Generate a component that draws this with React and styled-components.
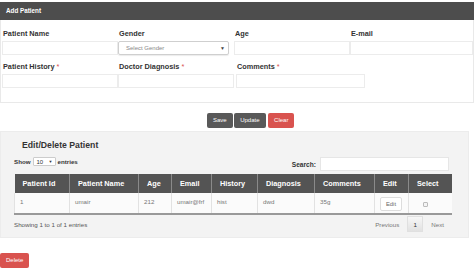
import React from "react";
import styled, { createGlobalStyle } from "styled-components";

const GlobalStyle = createGlobalStyle`
  html, body {
    margin: 0;
    padding: 0;
    background: #fff;
    font-family: "Liberation Sans", Arial, sans-serif;
    color: #333;
  }
  * { box-sizing: border-box; }
`;

const Page = styled.div`
  width: 474px;
  padding-top: 2px;
`;

const FormPanel = styled.section`
  border: 1px solid #e9e9e9;
  border-top: none;
  padding-bottom: 14px;
`;

const PanelHeading = styled.div`
  height: 18px;
  background: #4d4d4d;
  color: #fff;
  font-size: 6.3px;
  font-weight: bold;
  line-height: 18px;
  padding-left: 6px;
  margin: 0 -1px;
`;

const FormGrid = styled.div`
  display: grid;
  grid-template-columns: 116px 116px 116px 1fr;
  row-gap: 7px;
  padding: 9px 0 0 1px;
`;

const Field = styled.div`
  display: flex;
  flex-direction: column;
  padding-left: ${(p) => p.$shift || 0}px;
`;

const Label = styled.label`
  font-size: 7.3px;
  font-weight: bold;
  line-height: 10px;
  color: #333;
  margin-bottom: 2px;
  padding-left: 1px;
  span {
    color: #d9534f;
    font-weight: normal;
    margin-left: 2px;
  }
`;

const Input = styled.div`
  height: 14px;
  width: ${(p) => (p.$width ? `${p.$width}px` : "100%")};
  border: 1px solid #ececec;
  background: #fff;
`;

const Select = styled.div`
  height: 14px;
  width: ${(p) => p.$width}px;
  border: 1px solid #cfcfcf;
  border-radius: 2px;
  box-shadow: 0 1px 1px rgba(0, 0, 0, 0.08);
  display: flex;
  align-items: center;
  justify-content: space-between;
  padding: 0 3px 0 7px;
  font-size: 6px;
  color: #888;
  b {
    font-size: 5px;
    color: #444;
  }
`;

const ButtonRow = styled.div`
  display: flex;
  gap: 1.5px;
  padding-left: 207px;
  margin-top: 10px;
`;

const Button = styled.button`
  height: 15px;
  padding: 0 ${(p) => p.$pad || 5}px;
  border: none;
  border-radius: 2px;
  background: ${(p) => (p.$danger ? "#d9534f" : "#595959")};
  color: #fff;
  font-family: inherit;
  font-size: 6px;
  line-height: 15px;
  margin-left: ${(p) => p.$gap || 0}px;
`;

const ListPanel = styled.section`
  margin-top: 3px;
  width: 469px;
  background: #f3f3f3;
  border: 1px solid #ececec;
  padding: 7px 19px 5px 13px;
`;

const Title = styled.h3`
  margin: 0 0 6px 8px;
  font-size: 8.7px;
  line-height: 12px;
  font-weight: bold;
  color: #333;
`;

const Controls = styled.div`
  display: flex;
  justify-content: space-between;
  align-items: flex-start;
  height: 14px;
  margin-bottom: 3px;
`;

const Length = styled.div`
  display: flex;
  align-items: center;
  gap: 2px;
  font-size: 6.2px;
  font-weight: bold;
  color: #333;
`;

const SmallSelect = styled.div`
  width: 23px;
  height: 9px;
  background: #fff;
  border: 1px solid #ccc;
  border-radius: 1px;
  display: flex;
  align-items: center;
  justify-content: space-between;
  padding: 0 2px 0 3px;
  font-weight: normal;
  font-size: 6px;
  b { font-size: 4px; }
`;

const Search = styled.div`
  display: flex;
  align-items: center;
  gap: 4px;
  font-size: 6.6px;
  font-weight: bold;
  color: #333;
`;

const SearchBox = styled.div`
  width: 129px;
  height: 14px;
  background: #fff;
  border: 1px solid #e6e6e6;
`;

const Table = styled.table`
  width: 437px;
  border-collapse: collapse;
  table-layout: fixed;
  border-bottom: 2px solid #999;
`;

const Th = styled.th`
  height: 19px;
  background: #545454;
  color: #fff;
  font-size: 7.3px;
  font-weight: bold;
  text-align: left;
  padding: 0 0 0 8px;
  border-left: 1px solid #8a8a8a;
  white-space: nowrap;
  &:first-child { border-left: none; }
`;

const Td = styled.td`
  height: 21px;
  background: #fbfbfb;
  border-left: 1px solid #e2e2e2;
  font-size: 6.2px;
  color: #777;
  vertical-align: top;
  padding: 5px 0 0 5px;
  white-space: nowrap;
  overflow: hidden;
`;

const EditButton = styled.div`
  width: 22px;
  height: 14px;
  margin-top: -1px;
  background: #fff;
  border: 1px solid #ddd;
  border-radius: 2px;
  font-size: 5.8px;
  color: #666;
  display: flex;
  align-items: center;
  justify-content: center;
`;

const Check = styled.div`
  width: 5px;
  height: 5px;
  margin: 4px 0 0 9px;
  border: 1px solid #bbb;
  background: #f4f4f4;
  border-radius: 1px;
`;

const Footer = styled.div`
  display: flex;
  justify-content: space-between;
  align-items: center;
  margin-top: 1px;
  height: 16px;
`;

const Info = styled.div`
  font-size: 6.2px;
  color: #555;
`;

const Pager = styled.div`
  display: flex;
  align-items: center;
  font-size: 6.2px;
  color: #777;
  margin-right: 5px;
`;

const PageNum = styled.div`
  width: 16px;
  height: 16px;
  margin: 0 8px;
  background: linear-gradient(#f7f7f7, #e2e2e2);
  border: 1px solid #e0e0e0;
  color: #333;
  display: flex;
  align-items: center;
  justify-content: center;
`;

const DeleteRow = styled.div`
  margin-top: 10px;
`;

const columns = [
  ["Patient Id", 55],
  ["Patient Name", 69],
  ["Age", 33],
  ["Email", 40],
  ["History", 46],
  ["Diagnosis", 57],
  ["Comments", 60],
  ["Edit", 34],
  ["Select", 43],
];

const rows = [
  { id: 1, name: "umair", age: 212, email: "umair@frf", history: "hist", diagnosis: "dwd", comments: "35g" },
];

export default function App() {
  return (
    <Page>
      <GlobalStyle />
      <FormPanel>
        <PanelHeading>Add Patient</PanelHeading>
        <FormGrid>
          <Field>
            <Label>Patient Name</Label>
            <Input />
          </Field>
          <Field>
            <Label>Gender</Label>
            <Select $width={111}>
              Select Gender <b>▼</b>
            </Select>
          </Field>
          <Field>
            <Label>Age</Label>
            <Input />
          </Field>
          <Field>
            <Label>E-mail</Label>
            <Input />
          </Field>
          <Field>
            <Label>Patient History<span>*</span></Label>
            <Input />
          </Field>
          <Field>
            <Label>Doctor Diagnosis<span>*</span></Label>
            <Input />
          </Field>
          <Field $shift={2}>
            <Label>Comments<span>*</span></Label>
            <Input $width={129} />
          </Field>
        </FormGrid>
      </FormPanel>

      <ButtonRow>
        <Button $pad={6}>Save</Button>
        <Button $pad={6}>Update</Button>
        <Button $danger $pad={6} $gap={1}>Clear</Button>
      </ButtonRow>

      <ListPanel>
        <Title>Edit/Delete Patient</Title>
        <Controls>
          <Length>
            Show
            <SmallSelect>10 <b>▼</b></SmallSelect>
            entries
          </Length>
          <Search>
            Search:
            <SearchBox />
          </Search>
        </Controls>
        <Table>
          <colgroup>
            {columns.map(([c, w]) => (
              <col key={c} style={{ width: w }} />
            ))}
          </colgroup>
          <thead>
            <tr>
              {columns.map(([c]) => (
                <Th key={c}>{c}</Th>
              ))}
            </tr>
          </thead>
          <tbody>
            {rows.map((r) => (
              <tr key={r.id}>
                <Td>{r.id}</Td>
                <Td>{r.name}</Td>
                <Td>{r.age}</Td>
                <Td>{r.email}</Td>
                <Td>{r.history}</Td>
                <Td>{r.diagnosis}</Td>
                <Td>{r.comments}</Td>
                <Td><EditButton>Edit</EditButton></Td>
                <Td><Check /></Td>
              </tr>
            ))}
          </tbody>
        </Table>
        <Footer>
          <Info>Showing 1 to 1 of 1 entries</Info>
          <Pager>
            Previous
            <PageNum>1</PageNum>
            Next
          </Pager>
        </Footer>
      </ListPanel>

      <DeleteRow>
        <Button $danger $pad={6}>Delete</Button>
      </DeleteRow>
    </Page>
  );
}
